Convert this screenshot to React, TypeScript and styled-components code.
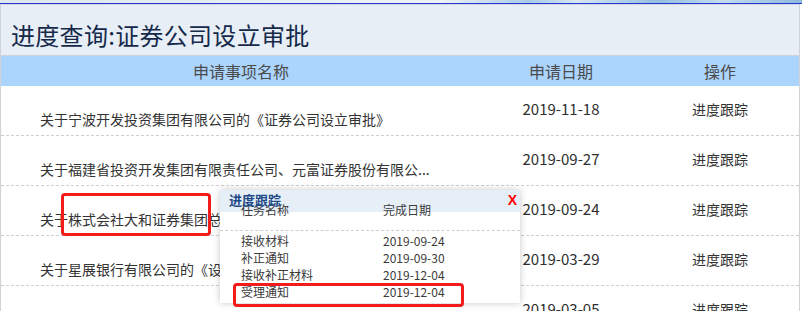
import React from "react";
import styled, { createGlobalStyle } from "styled-components";

const Global = createGlobalStyle`
  html, body { margin: 0; padding: 0; background: #ffffff; overflow: hidden; }
  body { font-family: "Noto Sans CJK SC", "Noto Sans", sans-serif; }
`;

const Page = styled.div`
  position: relative;
  width: 802px;
  height: 311px;
  overflow: hidden;
  background: #ffffff;
`;

const TopStrip = styled.div`
  height: 3px;
  border-bottom: 1px solid #2636d8;
  background: linear-gradient(90deg, #dde8f3 0%, #eef4fa 55%, #a9cbe6 66%, #d7e7f4 72%, #93bfe0 82%, #c4dcef 90%, #8cb8dc 100%);
`;

const Panel = styled.div`
  width: 798px;
  border-left: 1px solid #cfd3d8;
  border-right: 1px solid #cfd3d8;
`;

const TitleBar = styled.div`
  height: 50px;
  border-top: 1px solid #d2d6db;
  border-bottom: 1px solid #cfd3d8;
  background: #e7eef6;
  display: flex;
  align-items: flex-end;
  padding-left: 10px;
`;

const Title = styled.h1`
  margin: 0 0 6px 0;
  font-size: 24px;
  font-weight: 400;
  line-height: 28px;
  color: #15294a;
  letter-spacing: 0.3px;
`;

const Grid = styled.div`
  display: grid;
  grid-template-columns: 480px 160px 158px;
`;

const HeadRow = styled(Grid)`
  height: 30px;
  background: #acd5fe;
  align-items: center;
`;

const HeadCell = styled.div`
  text-align: center;
  font-size: 16px;
  color: #4a4a4a;
  line-height: 30px;
`;

const Row = styled(Grid)`
  height: 49px;
  border-bottom: 1px dashed #cfcfcf;
`;

const NameCell = styled.div`
  align-self: end;
  padding: 0 0 6px 39px;
  font-size: 14px;
  line-height: 20px;
  color: #333333;
  white-space: nowrap;
  overflow: hidden;
`;

const DateCell = styled.div`
  align-self: center;
  text-align: center;
  font-size: 15px;
  color: #2e2e2e;
  line-height: 20px;
  padding-bottom: 3px;
`;

const OpCell = styled.div`
  align-self: center;
  text-align: center;
  font-size: 14px;
  color: #333333;
  line-height: 20px;
  padding-bottom: 3px;
  cursor: pointer;
`;

const Popup = styled.div`
  position: absolute;
  left: 220px;
  top: 190px;
  width: 300px;
  height: 113px;
  background: #ffffff;
  box-shadow: 0 0 7px rgba(0, 0, 0, 0.22);
`;

const PopHeader = styled.div`
  height: 22px;
  background: #e6eef7;
  display: flex;
  justify-content: space-between;
  align-items: flex-start;
  padding: 0 3px 0 9px;
`;

const PopTitle = styled.span`
  font-size: 13px;
  font-weight: 700;
  line-height: 20px;
  color: #1d4a86;
  position: relative;
  z-index: 2;
`;

const Close = styled.span`
  font-family: "Liberation Sans", Arial, sans-serif;
  font-size: 14px;
  font-weight: 700;
  line-height: 20px;
  color: #ff0000;
  position: relative;
  z-index: 2;
  cursor: pointer;
`;

const PopTable = styled.div`
  margin-top: -11px;
  position: relative;
  z-index: 1;
`;

const PopGrid = styled.div`
  display: grid;
  grid-template-columns: 142px 1fr;
  padding-left: 21px;
  font-size: 12px;
  color: #3a3a3a;
  line-height: 17px;
`;

const PopHead = styled(PopGrid)`
  padding-bottom: 12px;
  border-bottom: 1px dashed #cfcfcf;
  margin-bottom: 1px;
`;

const Mark = styled.div<{ $l: number; $t: number; $w: number; $h: number }>`
  position: absolute;
  left: ${(p) => p.$l}px;
  top: ${(p) => p.$t}px;
  width: ${(p) => p.$w}px;
  height: ${(p) => p.$h}px;
  border: 3px solid #f21c1c;
  border-radius: 4px;
  box-sizing: border-box;
  z-index: 5;
`;

const rows = [
  { name: "关于宁波开发投资集团有限公司的《证券公司设立审批》", date: "2019-11-18" },
  { name: "关于福建省投资开发集团有限责任公司、元富证券股份有限公...", date: "2019-09-27" },
  { name: "关于株式会社大和证券集团总部的《证券公司设立审批》", date: "2019-09-24" },
  { name: "关于星展银行有限公司的《设立证券公司审批》", date: "2019-03-29" },
  { name: "关于东亚银行有限公司的《证券公司设立审批》", date: "2019-03-05" },
];

const tasks = [
  { name: "接收材料", date: "2019-09-24" },
  { name: "补正通知", date: "2019-09-30" },
  { name: "接收补正材料", date: "2019-12-04" },
  { name: "受理通知", date: "2019-12-04" },
];

export default function App() {
  return (
    <Page>
      <Global />
      <TopStrip />
      <Panel>
        <TitleBar>
          <Title>进度查询:证券公司设立审批</Title>
        </TitleBar>
        <HeadRow>
          <HeadCell>申请事项名称</HeadCell>
          <HeadCell>申请日期</HeadCell>
          <HeadCell>操作</HeadCell>
        </HeadRow>
        {rows.map((r) => (
          <Row key={r.date + r.name}>
            <NameCell>{r.name}</NameCell>
            <DateCell>{r.date}</DateCell>
            <OpCell>进度跟踪</OpCell>
          </Row>
        ))}
      </Panel>
      <Popup>
        <PopHeader>
          <PopTitle>进度跟踪</PopTitle>
          <Close>X</Close>
        </PopHeader>
        <PopTable>
          <PopHead>
            <span>任务名称</span>
            <span>完成日期</span>
          </PopHead>
          {tasks.map((t) => (
            <PopGrid key={t.name}>
              <span>{t.name}</span>
              <span>{t.date}</span>
            </PopGrid>
          ))}
        </PopTable>
      </Popup>
      <Mark $l={61} $t={193} $w={150} $h={43} />
      <Mark $l={233} $t={283} $w={231} $h={24} />
    </Page>
  );
}
